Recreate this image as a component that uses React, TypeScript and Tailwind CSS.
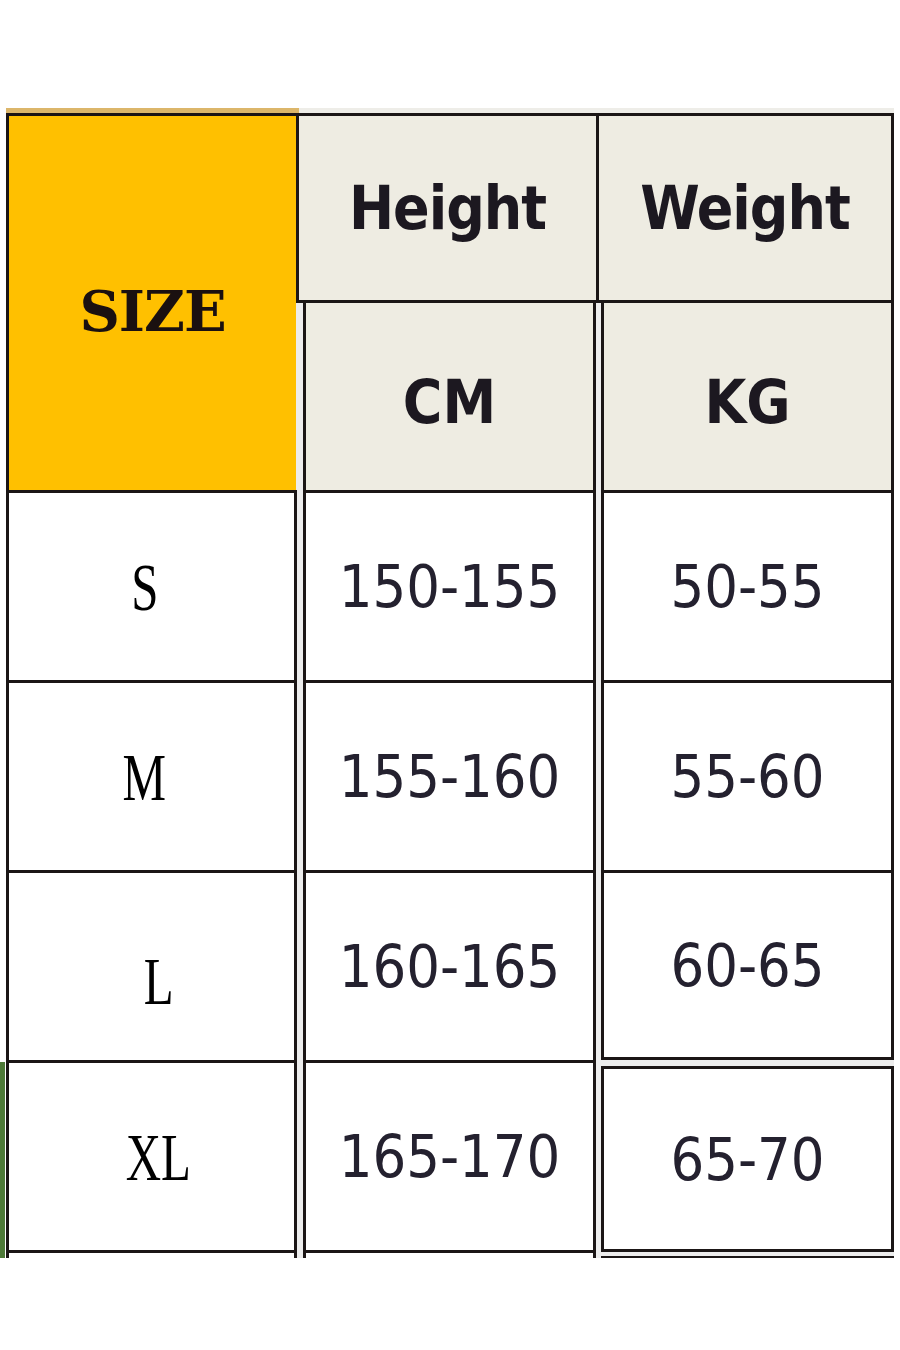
const sans = "font-['DejaVu_Sans_Condensed','DejaVu_Sans',sans-serif]";

type Row = { size: string; cm: string; kg: string; shift: string };

const rows: Row[] = [
  { size: "S", cm: "150-155", kg: "50-55", shift: "pr-[14px]" },
  { size: "M", cm: "155-160", kg: "55-60", shift: "pr-[14px]" },
  { size: "L", cm: "160-165", kg: "60-65", shift: "pl-[14px] pt-[28px]" },
  { size: "XL", cm: "165-170", kg: "65-70", shift: "pl-[14px]" },
];

function SizeCell({ row, first }: { row: Row; first: boolean }) {
  return (
    <div
      className={`flex h-[193px] items-center justify-center border-[3px] border-[#1b1616] bg-white ${first ? "" : "-mt-[3px]"} ${row.shift}`}
    >
      <span className="inline-block scale-x-[0.72] font-['Liberation_Serif',serif] text-[68px] leading-none text-black">
        {row.size}
      </span>
    </div>
  );
}

function NumCell({ value, className }: { value: string; className: string }) {
  return (
    <div
      className={`flex h-[193px] items-center justify-center border-[3px] border-[#1b1616] bg-white ${className}`}
    >
      <span className={`${sans} text-[59px] leading-none text-[#24212f]`}>{value}</span>
    </div>
  );
}

export default function App() {
  return (
    <div className="flex h-[1350px] w-[900px] bg-white pt-[108px]">
      {/* scan edge on the left */}
      <div className="flex h-[1150px] w-[6px] flex-col justify-end">
        <div className="h-[196px] w-[5px] bg-[#4e7a38]" />
      </div>

      <div className="h-[1150px] w-[888px] overflow-hidden">
        <div className="flex h-[5px]">
          <div className="w-[293px] bg-[#dcb66a]" />
          <div className="flex-1 bg-[#eeede8]" />
        </div>

        {/* header */}
        <div className="flex">
          <div className="flex h-[380px] w-[293px] items-center justify-center border-[3px] border-[#1b1414] bg-[#ffc000] pt-[16px]">
            <span className="font-['DejaVu_Serif',serif] text-[56px] font-bold leading-none tracking-[-1px] text-[#1a1010]">
              SIZE
            </span>
          </div>
          <div className="-ml-[3px] flex flex-1 flex-col bg-[#ededed]">
            <div className="flex h-[190px]">
              <div className="flex w-[303px] items-center justify-center border-[3px] border-[#1b1616] bg-[#eeece2]">
                <span className={`${sans} text-[60px] font-bold leading-none tracking-[-1px] text-[#1c1820]`}>
                  Height
                </span>
              </div>
              <div className="-ml-[3px] flex flex-1 items-center justify-center border-[3px] border-[#1b1616] bg-[#eeece2]">
                <span className={`${sans} text-[60px] font-bold leading-none tracking-[-1px] text-[#1c1820]`}>
                  Weight
                </span>
              </div>
            </div>
            <div className="-mt-[3px] flex h-[193px] gap-[5px] pl-[7px]">
              <div className="flex w-[293px] items-center justify-center border-[3px] border-[#1b1616] bg-[#eeece2] pt-[10px]">
                <span className={`${sans} text-[60px] font-bold leading-none text-[#1c1820]`}>CM</span>
              </div>
              <div className="flex flex-1 items-center justify-center border-[3px] border-[#1b1616] bg-[#eeece2] pt-[10px]">
                <span className={`${sans} text-[60px] font-bold leading-none text-[#1c1820]`}>KG</span>
              </div>
            </div>
          </div>
        </div>

        {/* data rows */}
        <div className="-mt-[3px] flex gap-[6px] bg-[#ededed]">
          <div className="flex w-[291px] flex-col">
            {rows.map((r, i) => (
              <SizeCell key={r.size} row={r} first={i === 0} />
            ))}
            <div className="-mt-[3px] h-[193px] border-[3px] border-[#1b1616] bg-white" />
          </div>
          <div className="flex w-[293px] flex-col">
            {rows.map((r, i) => (
              <NumCell key={r.cm} value={r.cm} className={i === 0 ? "" : "-mt-[3px]"} />
            ))}
            <div className="-mt-[3px] h-[193px] border-[3px] border-[#1b1616] bg-white" />
          </div>
          <div className="-ml-[1px] flex flex-1 flex-col">
            {rows.map((r, i) => (
              <NumCell
                key={r.kg}
                value={r.kg}
                className={i === 0 ? "" : i === 2 ? "-mt-[3px] !h-[190px]" : i === 3 ? "mt-[6px] !h-[186px]" : "-mt-[3px]"}
              />
            ))}
            <div className="mt-[4px] h-[193px] border-[3px] border-[#1b1616] bg-white" />
          </div>
        </div>
      </div>
    </div>
  );
}
